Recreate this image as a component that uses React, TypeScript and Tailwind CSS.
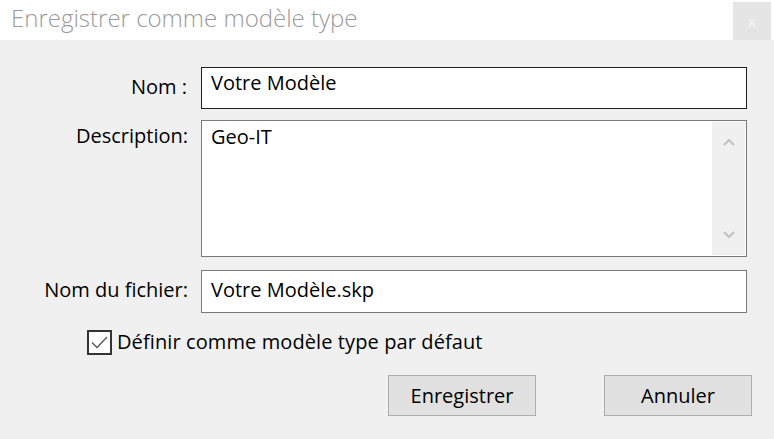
import React from 'react';

const font = { fontFamily: '"Open Sans", "Noto Sans", sans-serif' };

const Chevron = ({ up }: { up?: boolean }) => (
  <svg width="12" height="8" viewBox="0 0 12 8" fill="none">
    <path
      d={up ? 'M1 7 L6 2 L11 7' : 'M1 1 L6 6 L11 1'}
      stroke="#c2c2c2"
      strokeWidth="2.2"
    />
  </svg>
);

export default function App() {
  return (
    <div className="w-[774px] h-[439px] bg-[#f0f0f0] text-black overflow-hidden" style={font}>
      {/* Title bar */}
      <div className="h-[40px] bg-white flex items-start justify-between">
        <div className="pl-[11px] pt-[1px] text-[24px] leading-[33px] text-[#9a9a9a] font-light">
          Enregistrer comme modèle type
        </div>
        <div className="w-[38px] h-[38px] mt-[2px] mr-[3px] bg-[#e5e5e5] flex items-center justify-center text-[15px] text-[#f7f7f7]">
          x
        </div>
      </div>

      {/* Form */}
      <div className="pt-[27px] text-[20px]">
        <div className="grid grid-cols-[188px_546px] gap-x-[13px]">
          <div className="text-right h-[42px] pt-[6px] leading-[28px] pr-[1px]">Nom :</div>
          <div className="h-[42px] bg-white border border-[#1e1e1e] pl-[9px] pt-[1px] leading-[28px]">
            Votre Modèle
          </div>

          <div className="text-right mt-[11px] pt-[2px] leading-[28px]">Description:</div>
          <div className="mt-[11px] h-[137px] bg-white border border-[#7a7a7a] flex">
            <div className="flex-1 pl-[9px] pt-[2px] leading-[28px]">Geo-IT</div>
            <div className="w-[33px] my-[1px] mr-[1px] bg-[#f0f0f0] flex flex-col items-center justify-between py-[16px]">
              <Chevron up />
              <Chevron />
            </div>
          </div>

          <div className="text-right mt-[13px] pt-[6px] leading-[28px]">Nom du fichier:</div>
          <div className="mt-[13px] h-[43px] bg-white border border-[#7a7a7a] pl-[9px] pt-[5px] leading-[28px]">
            Votre Modèle.skp
          </div>
        </div>

        <div className="mt-[15px] ml-[87px] flex items-center gap-[5px]">
          <div className="w-[25px] h-[25px] border-2 border-[#333333] bg-white flex items-center justify-center">
            <svg width="17" height="13" viewBox="0 0 17 13" fill="none">
              <path d="M1 6.5 L6 11.5 L16 1" stroke="#555555" strokeWidth="1.3" />
            </svg>
          </div>
          <span className="leading-[28px] tracking-[0.1px]">Définir comme modèle type par défaut</span>
        </div>

        <div className="mt-[19px] flex">
          <button className="ml-[388px] w-[148px] h-[41px] bg-[#e1e1e1] border border-[#adadad] leading-[28px]">
            Enregistrer
          </button>
          <button className="ml-[68px] w-[148px] h-[41px] bg-[#e1e1e1] border border-[#adadad] leading-[28px]">
            Annuler
          </button>
        </div>
      </div>
    </div>
  );
}
